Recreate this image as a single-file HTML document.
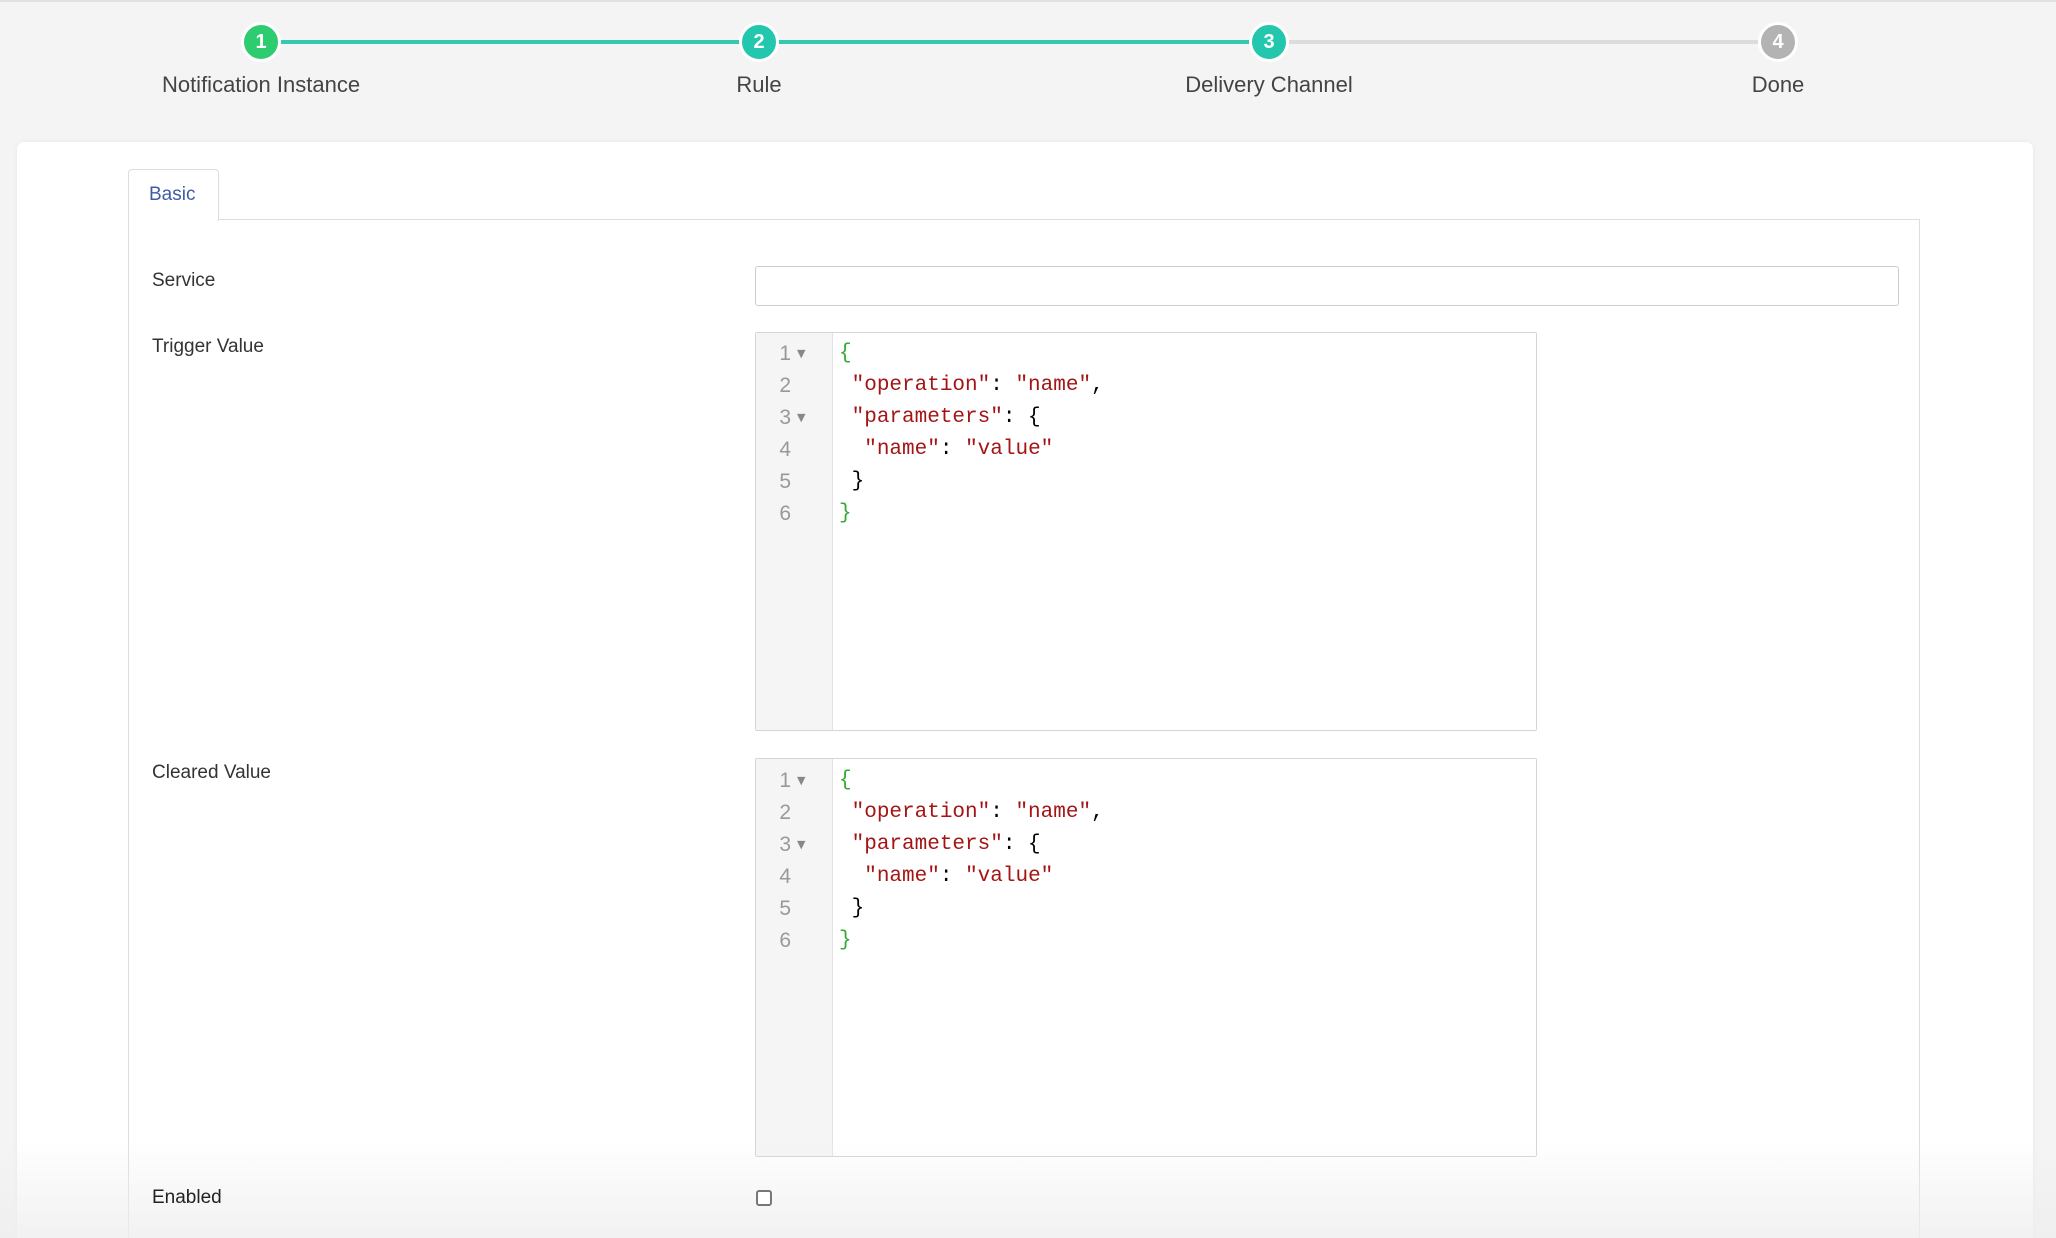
<!DOCTYPE html>
<html style="overflow:hidden;width:2056px;height:1238px"><head><meta charset="utf-8"><style>
*{box-sizing:border-box;margin:0;padding:0}
body{width:2056px;height:1238px;background:#f4f4f4;position:relative;overflow:hidden;font-family:"Liberation Sans",sans-serif;color:#333}
.topline{position:absolute;left:0;top:0;width:2056px;height:2px;background:#e2e2e2}
.ln{position:absolute;top:40px;height:4px}
.c{position:absolute;top:22px;width:40px;height:40px;border-radius:50%;border:3px solid #fff;color:#fff;font-size:20px;text-align:center;line-height:34px;font-weight:bold}
.lbl{position:absolute;top:72px;font-size:22px;color:#444;transform:translateX(-50%);white-space:nowrap}
.card{position:absolute;left:17px;top:142px;width:2016px;height:1096px;background:#fff;border-radius:7px 7px 0 0;box-shadow:0 0 6px rgba(0,0,0,.05)}
.tab{position:absolute;left:128px;top:169px;width:91px;height:52px;border:1px solid #ddd;border-bottom:none;border-radius:4px 4px 0 0;background:#fff;color:#3f5aa8;font-size:19px;padding:14px 0 0 20px;z-index:2}
.panel{position:absolute;left:128px;top:219px;width:1792px;height:1019px;border:1px solid #ddd;border-bottom:none}
.fl{position:absolute;left:152px;font-size:19px;color:#333}
.input{position:absolute;left:755px;top:266px;width:1144px;height:40px;border:1px solid #ccc;border-radius:3px;background:#fff}
.ed{position:absolute;left:755px;width:782px;height:399px;border:1px solid #d5d5d5;background:#fff;border-radius:2px;font-family:"Liberation Mono",monospace;font-size:21px}
.gut{position:absolute;left:0;top:0;width:77px;height:100%;background:#f5f5f5;border-right:1px solid #e3e3e3}
.row{position:absolute;height:32px;line-height:32px;white-space:pre}
.num{left:0;width:35px;text-align:right;color:#999;font-family:"Liberation Sans",sans-serif;font-size:21px}
.fold{left:41px;color:#888;font-size:11px;font-family:"DejaVu Sans",sans-serif}
.code{left:83px;color:#000}
.s{color:#a31515}.g{color:#3a3}
.cb{position:absolute;left:756px;top:1190px;width:16px;height:16px;border:2px solid #777;border-radius:3px;background:#fff}
.fade{position:absolute;left:0;top:1140px;width:2056px;height:98px;background:linear-gradient(rgba(240,240,240,0),rgba(238,238,238,.8))}
</style></head><body>
<div class="topline"></div>
<div class="ln" style="left:279px;width:990px;background:#33c9b0"></div>
<div class="ln" style="left:1269px;width:509px;background:#dcdcdc"></div>
<div class="c" style="left:241px;background:#2ecc71">1</div>
<div class="c" style="left:739px;background:#22c7ad">2</div>
<div class="c" style="left:1249px;background:#22c7ad">3</div>
<div class="c" style="left:1758px;background:#b3b3b3">4</div>
<div class="lbl" style="left:261px">Notification Instance</div>
<div class="lbl" style="left:759px">Rule</div>
<div class="lbl" style="left:1269px">Delivery Channel</div>
<div class="lbl" style="left:1778px">Done</div>
<div class="card"></div>
<div class="panel"></div>
<div class="tab">Basic</div>
<div class="fl" style="top:270px">Service</div>
<div class="input"></div>
<div class="fl" style="top:336px">Trigger Value</div>
<div class="ed" style="top:332px">
<div class="gut"></div>
<div class="row num" style="top:5px">1</div><div class="row fold" style="top:5px">▼</div>
<div class="row num" style="top:37px">2</div>
<div class="row num" style="top:69px">3</div><div class="row fold" style="top:69px">▼</div>
<div class="row num" style="top:101px">4</div>
<div class="row num" style="top:133px">5</div>
<div class="row num" style="top:165px">6</div>
<div class="row code" style="top:5px"><span class="g">{</span></div>
<div class="row code" style="top:37px"> <span class="s">"operation"</span>: <span class="s">"name"</span>,</div>
<div class="row code" style="top:69px"> <span class="s">"parameters"</span>: {</div>
<div class="row code" style="top:101px">  <span class="s">"name"</span>: <span class="s">"value"</span></div>
<div class="row code" style="top:133px"> }</div>
<div class="row code" style="top:165px"><span class="g">}</span></div>
</div>
<div class="fl" style="top:762px">Cleared Value</div>
<div class="ed" style="top:758px">
<div class="gut"></div>
<div class="row num" style="top:6px">1</div><div class="row fold" style="top:6px">▼</div>
<div class="row num" style="top:38px">2</div>
<div class="row num" style="top:70px">3</div><div class="row fold" style="top:70px">▼</div>
<div class="row num" style="top:102px">4</div>
<div class="row num" style="top:134px">5</div>
<div class="row num" style="top:166px">6</div>
<div class="row code" style="top:6px"><span class="g">{</span></div>
<div class="row code" style="top:38px"> <span class="s">"operation"</span>: <span class="s">"name"</span>,</div>
<div class="row code" style="top:70px"> <span class="s">"parameters"</span>: {</div>
<div class="row code" style="top:102px">  <span class="s">"name"</span>: <span class="s">"value"</span></div>
<div class="row code" style="top:134px"> }</div>
<div class="row code" style="top:166px"><span class="g">}</span></div>
</div>
<div class="fade"></div>
<div class="fl" style="top:1187px;color:#222">Enabled</div>
<div class="cb"></div>
</body></html>
